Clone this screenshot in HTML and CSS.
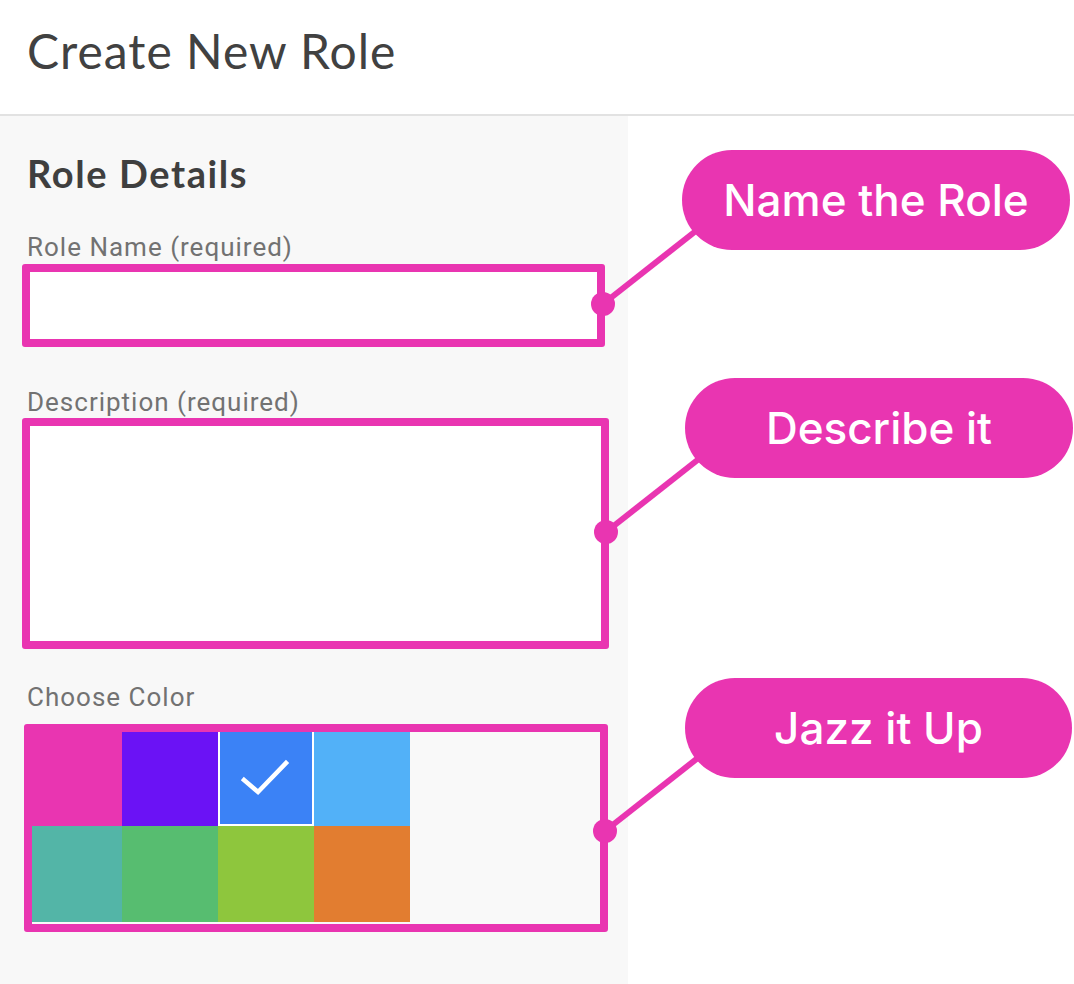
FILE: index.html
```html
<!DOCTYPE html>
<html lang="en">
<head>
<meta charset="utf-8">
<title>Create New Role</title>
<link rel="stylesheet" href="styles.css">
</head>
<body>
<div class="page">
  <header class="header">
    <h1 class="title">Create New Role</h1>
  </header>
  <div class="main">
    <section class="panel">
      <h2 class="section-title">Role Details</h2>
      <label class="label label-name">Role Name (required)</label>
      <div class="box box-name"></div>
      <label class="label label-desc">Description (required)</label>
      <div class="box box-desc"></div>
      <label class="label label-color">Choose Color</label>
      <div class="box box-color">
        <div class="swatches">
          <div class="sw sw-pink"></div>
          <div class="sw sw-purple"></div>
          <div class="sw sw-blue selected">
            <svg class="check" viewBox="0 0 96 94" width="96" height="94" aria-hidden="true">
              <polyline points="26,48 40,60 68,31" fill="none" stroke="#ffffff" stroke-width="4.5" stroke-linecap="square" stroke-linejoin="miter"/>
            </svg>
          </div>
          <div class="sw sw-sky"></div>
          <div class="sw sw-teal"></div>
          <div class="sw sw-green"></div>
          <div class="sw sw-lime"></div>
          <div class="sw sw-orange"></div>
        </div>
      </div>
    </section>
    <div class="aside"></div>
  </div>

  <svg class="connectors" width="1074" height="984" viewBox="0 0 1074 984" aria-hidden="true">
    <line x1="603" y1="304" x2="725" y2="208" />
    <line x1="606" y1="532" x2="728" y2="436" />
    <line x1="605" y1="831" x2="727" y2="735" />
    <circle cx="603" cy="304" r="12" />
    <circle cx="606" cy="532" r="12" />
    <circle cx="605" cy="831" r="12" />
  </svg>

  <div class="bubble bubble-1">Name the Role</div>
  <div class="bubble bubble-2">Describe it</div>
  <div class="bubble bubble-3">Jazz it Up</div>
</div>
</body>
</html>
```

FILE: styles.css
```css
* { box-sizing: border-box; }

html, body {
  margin: 0;
  padding: 0;
  background: #ffffff;
}

.page {
  position: relative;
  width: 1074px;
  min-height: 984px;
  overflow: hidden;
}

.header {
  height: 116px;
  padding: 23px 0 0 27px;
  border-bottom: 2px solid #e2e2e2;
  background: #ffffff;
}

.title {
  margin: 0;
  font-family: Lato, "Noto Sans", sans-serif;
  font-weight: 400;
  font-size: 48px;
  line-height: 56px;
  color: #414141;
  letter-spacing: 1px;
}

.main {
  display: flex;
}

.panel {
  width: 628px;
  min-height: 868px;
  background: #f8f8f8;
  padding: 36px 0 0 22px;
  display: flex;
  flex-direction: column;
  align-items: flex-start;
}

.aside {
  flex: 1;
  background: #ffffff;
}

.section-title {
  margin: 0 0 0 5px;
  font-family: Lato, "Noto Sans", sans-serif;
  font-weight: 700;
  font-size: 38px;
  line-height: 42px;
  color: #3f3f3f;
  letter-spacing: 1.6px;
}

.label {
  display: block;
  margin-left: 5px;
  font-family: Roboto, "Noto Sans", sans-serif;
  font-size: 26px;
  line-height: 30px;
  color: #727272;
  font-weight: 400;
  letter-spacing: 1px;
}

.label-name { margin-top: 38px; }
.label-desc { margin-top: 40px; }
.label-color { margin-top: 33px; }

.box {
  border: 8px solid #e935b1;
  border-radius: 3px;
}

.box-name {
  margin-top: 2px;
  width: 583px;
  height: 83px;
  background: #ffffff;
}

.box-desc {
  margin-top: 1px;
  width: 587px;
  height: 231px;
  background: #ffffff;
}

.box-color {
  margin-top: 12px;
  margin-left: 2px;
  width: 584px;
  height: 208px;
  background: #f9f9f9;
}

.swatches {
  display: grid;
  grid-template-columns: 90px 96px 96px 96px;
  grid-template-rows: 94px 96px;
}

.sw { position: relative; }
.sw-pink { background: #e935b1; }
.sw-purple { background: #6b12f5; }
.sw-blue { background: #3b82f6; }
.sw-sky { background: #52b1f8; }
.sw-teal { background: #53b5a7; }
.sw-green { background: #57bd70; }
.sw-lime { background: #8ec63d; }
.sw-orange { background: #e27d30; }

.selected {
  border: 2px solid #ffffff;
  border-top: 0;
}

.check {
  position: absolute;
  left: -2px;
  top: 0;
}

.connectors {
  position: absolute;
  left: 0;
  top: 0;
  pointer-events: none;
}

.connectors line {
  stroke: #e935b1;
  stroke-width: 6;
}

.connectors circle {
  fill: #e935b1;
}

.bubble {
  position: absolute;
  height: 100px;
  border-radius: 50px;
  background: #e935b1;
  color: #ffffff;
  font-family: Inter, "Noto Sans", sans-serif;
  font-weight: 500;
  font-size: 44px;
  line-height: 100px;
  text-align: center;
  white-space: nowrap;
}

.bubble-1 { left: 682px; top: 150px; width: 388px; }
.bubble-2 { left: 685px; top: 378px; width: 388px; }
.bubble-3 { left: 685px; top: 678px; width: 387px; }
```
